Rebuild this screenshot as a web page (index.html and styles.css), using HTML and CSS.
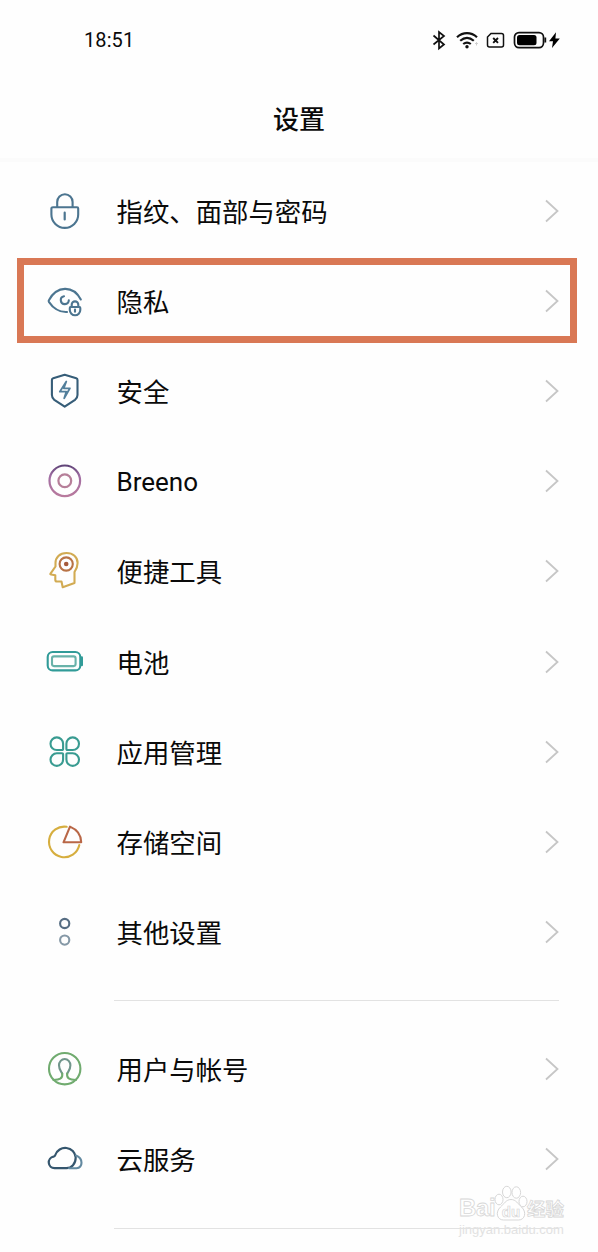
FILE: index.html
```html
<!DOCTYPE html>
<html lang="zh-CN">
<head>
<meta charset="utf-8">
<title>设置</title>
<link rel="stylesheet" href="styles.css">
</head>
<body>
<div class="screen">
  <header class="status">
    <span class="time">18:51</span>
    <svg class="status-icons" width="130" height="24" viewBox="0 0 130 24" fill="none" stroke="#111" stroke-width="1.7">
      <path d="M3.5 7.5L14 16.5L9 20.5V4L14 8L3.5 16.5"/>
      <g stroke-width="2.2"><path d="M27 9.2C33 3.8 41 3.8 47 9.2M30.2 12.8C34.5 9 39.5 9 43.800 12.800M33.200 16C35.500 14.200 38.500 14.200 40.800 16"/></g>
      <circle cx="37" cy="18.700" r="1.700" fill="#111" stroke="none"/>
      <path d="M46.500 14.500v3m-1.300-1.500l1.300-1.500 1.300 1.500" stroke="#ccc" stroke-width="1"/>
      <path d="M61 5.500H71.500Q73.500 5.500 73.500 7.500V17Q73.500 19 71.500 19H59.500Q57.500 19 57.500 17V9Z" stroke-width="1.500"/>
      <path d="M63.200 10L68 14.800M68 10L63.200 14.800" stroke-width="1.900"/>
      <rect x="84.500" y="4.600" width="29" height="15" rx="4.500" stroke-width="1.700"/>
      <rect x="87" y="7" width="19.500" height="10.200" rx="2.500" fill="#000" stroke="none"/>
      <path d="M115.300 9.500v5" stroke-width="1.800"/>
      <path d="M126 4.300L119 13.200H123L122 20L129.800 10.500H125.400Z" fill="#000" stroke="none"/>
    </svg>
  </header>
  <h1 class="title">设置</h1>
  <main class="list">
    <div class="row"><svg class="icon" viewBox="0 0 50 50" stroke="#4c7590"><path d="M17.200 21V16a7.700 7.700 0 0 1 15.400 0V21M13 21.300H37Q38.200 21.300 38.200 22.500V28.500a13.400 13.400 0 0 1-26.800 0V22.500Q11.400 21.300 13 21.300Z"/><path d="M24.700 26.700V33.500" stroke-width="2.200"/></svg><span>指纹、面部与密码</span><svg class="arrow" viewBox="0 0 14 24"><path d="M1 1.500L12.500 12L1 22.500"/></svg></div>
    <div class="row selected"><svg class="icon" viewBox="0 0 50 50" stroke="#4c7590"><path d="M27 36C18.500 36.500 12 30.500 8.900 25.800Q8.400 25 8.900 24.200C17 9.500 33 9 40.800 23.500"/><path d="M24 20.200A4 4 0 1 0 28.800 24.300"/><path d="M31.700 31V28.700a3.300 3.300 0 0 1 6.600 0V31M30.500 31H39.500Q40.300 31 40.300 32V34a5.200 5.200 0 0 1-10.500 0V32Q29.800 31 30.500 31ZM35 33.500V35.800"/></svg><span>隐私</span><svg class="arrow" viewBox="0 0 14 24"><path d="M1 1.500L12.500 12L1 22.500"/></svg></div>
    <div class="row"><svg class="icon" viewBox="0 0 50 50" stroke="#365d78"><path d="M24.700 8.800L36.300 12.300Q37.500 12.700 37.500 14V29Q37.500 32 35 33.800L24.700 40.700L14.300 33.800Q11.900 32 11.900 29V14Q11.900 12.700 13.200 12.300Z"/><path stroke="#527f9b" d="M26.300 15.500L19.800 25.700H26.300L24.200 32.300L29.900 22.300H23.800Z" stroke-width="1.800"/></svg><span>安全</span><svg class="arrow" viewBox="0 0 14 24"><path d="M1 1.500L12.500 12L1 22.500"/></svg></div>
    <div class="row"><svg class="icon" viewBox="0 0 50 50"><defs><linearGradient id="breeno" x1="0" y1="0" x2="0" y2="1"><stop stop-color="#604478"/><stop offset=".35" stop-color="#a16da3"/><stop offset="1" stop-color="#b87a9d"/></linearGradient></defs><circle cx="24.800" cy="24.800" r="15.300" stroke="url(#breeno)" stroke-width="2.200"/><circle cx="24.800" cy="24.800" r="6.400" stroke="#b67f99" stroke-width="2.200"/></svg><span class="latin">Breeno</span><svg class="arrow" viewBox="0 0 14 24"><path d="M1 1.500L12.500 12L1 22.500"/></svg></div>
    <div class="row"><svg class="icon" viewBox="0 0 50 50" stroke="#d2ab53"><path d="M26.500 7C19.500 7 15.500 11.500 15.500 17V20.500L10.500 27.600Q10 28.500 11 28.500L15.300 29.200V34Q15.300 35.500 17 35.500H21.500L22.700 41.200L34.500 37V26C36.500 23 37.600 20 37.600 17C37.600 11 33 7 26.500 7Z"/><circle cx="26.200" cy="18" r="6.600" stroke="#b87346"/><circle cx="26.200" cy="18" r="2.300" fill="#a55a3b" stroke="none"/></svg><span>便捷工具</span><svg class="arrow" viewBox="0 0 14 24"><path d="M1 1.500L12.500 12L1 22.500"/></svg></div>
    <div class="row"><svg class="icon" viewBox="0 0 50 50" stroke="#319b98"><rect x="7.700" y="15" width="32.600" height="18.400" rx="5"/><rect x="12" y="19.400" width="23.600" height="9.700" rx="2" stroke="#68b2a9"/><path d="M41.800 20.500V28" stroke-width="2.400"/></svg><span>电池</span><svg class="arrow" viewBox="0 0 14 24"><path d="M1 1.500L12.500 12L1 22.500"/></svg></div>
    <div class="row"><svg class="icon" viewBox="0 0 50 50" stroke="#399b91"><path id="petal" d="M16.800 10.400a6.300 6.300 0 0 1 6.300 6.300V22Q23.100 23 22.100 23H16.800a6.300 6.300 0 0 1 0-12.600Z"/><use href="#petal" transform="translate(49.500 0) scale(-1 1)"/><use href="#petal" transform="translate(0 49.300) scale(1 -1)"/><use href="#petal" transform="translate(49.500 49.300) scale(-1 -1)"/></svg><span>应用管理</span><svg class="arrow" viewBox="0 0 14 24"><path d="M1 1.500L12.500 12L1 22.500"/></svg></div>
    <div class="row"><svg class="icon" viewBox="0 0 50 50" stroke="#d6ae3f"><path d="M26.700 9.800A15.300 15.300 0 1 0 39.300 28"/><path d="M30 9.600L23.500 25.300H41.200Q41.200 14.300 30 9.600Z" stroke="#b96747"/></svg><span>存储空间</span><svg class="arrow" viewBox="0 0 14 24"><path d="M1 1.500L12.500 12L1 22.500"/></svg></div>
    <div class="row"><svg class="icon" viewBox="0 0 50 50" stroke="#566d83"><circle cx="24.700" cy="16.500" r="4.600"/><circle cx="24.700" cy="33.100" r="4.600" stroke="#8598a6"/></svg><span>其他设置</span><svg class="arrow" viewBox="0 0 14 24"><path d="M1 1.500L12.500 12L1 22.500"/></svg></div>
    <hr class="divider">
    <div class="row"><svg class="icon" viewBox="0 0 50 50" stroke="#70ab6f"><circle cx="24.700" cy="24.700" r="15.700"/><path stroke="#71968c" d="M22.200 29.500C21 27 19 25.500 19 21.300A5.700 6.300 0 0 1 30.400 21.300C30.400 25.500 28.400 27 27.200 29.500"/><path d="M22.200 29.500C23.200 35 19 35.500 13.500 36M27.200 29.500C26.200 35 30.400 35.500 35.900 36"/></svg><span>用户与帐号</span><svg class="arrow" viewBox="0 0 14 24"><path d="M1 1.500L12.500 12L1 22.500"/></svg></div>
    <div class="row"><svg class="icon" viewBox="0 0 50 50" stroke="#35566e"><path d="M14.500 34.200A5.800 5.800 0 0 1 13.500 22.700Q15 22.300 15.300 21A10.500 10.500 0 0 1 35.700 23.500C35.700 30 31.500 34.200 26.500 34.200Z" stroke-width="2.200"/><path d="M29 34.200H36.500C43 33.500 43.500 24.500 36 21.500" stroke="#6289a0"/></svg><span>云服务</span><svg class="arrow" viewBox="0 0 14 24"><path d="M1 1.500L12.500 12L1 22.500"/></svg></div>
    <hr class="divider">
  </main>
  <div class="watermark">
    <div class="brand">
      <span class="bai">Bai</span>
      <svg class="paw" width="34" height="38" viewBox="0 0 34 38"><ellipse cx="5" cy="14.500" rx="4" ry="5.300"/><ellipse cx="12.800" cy="7" rx="4.300" ry="5.700"/><ellipse cx="22.300" cy="7.500" rx="4.300" ry="5.700"/><ellipse cx="29" cy="16.500" rx="4" ry="5.300"/><path d="M17 14.500C12 14.500 10 19 6.500 22C1 27 3 35 9.500 35H24.500C31 35 33 27 27.500 22C24 19 22 14.500 17 14.500Z"/><text x="17" y="31.500" text-anchor="middle">du</text></svg>
      <span class="cn">经验</span>
    </div>
    <div class="site">jingyan.baidu.com</div>
  </div>
</div>
</body>
</html>
```
FILE: styles.css
```css
* { box-sizing: border-box; }
body { margin: 0; background: #fefefe; }
.screen {
  position: relative;
  width: 598px;
  height: 1252px;
  overflow: hidden;
  color: #0a0a0a;
  font-family: "Noto Sans CJK SC", sans-serif;
}
.status {
  display: flex;
  justify-content: space-between;
  align-items: center;
  height: 80px;
  padding: 0 36px 0 84px;
}
.time { font: 20px/24px Roboto, sans-serif; letter-spacing: .1px; }
.status-icons { display: block; margin: 0 2px 0 0; }
.title {
  height: 78px;
  margin: 0;
  font-size: 26px;
  font-weight: 500;
  line-height: 76px;
  text-align: center;
}
.list {
  padding-top: 4px;
  border-top: 4px solid #fbfbfb;
}
.row {
  display: flex;
  align-items: center;
  height: 90.1px;
  padding: 0 39px 0 40px;
  font-size: 26.4px;
  line-height: 40px;
}
.row span { flex: 1; padding-left: 26.5px; }
.row .latin { font-family: Roboto, sans-serif; font-size: 26px; padding-top: 2px; }
.selected { position: relative; }
.selected::after {
  content: "";
  position: absolute;
  inset: 2px 21.5px 3px 17px;
  border: 7px solid #d97855;
}
.icon {
  display: block;
  width: 50px;
  height: 50px;
  fill: none;
  stroke-width: 2.1;
  stroke-linecap: round;
  stroke-linejoin: round;
}
.arrow {
  display: block;
  width: 14px;
  height: 24px;
  fill: none;
  stroke: #c6c6c6;
  stroke-width: 1.8;
}
.divider {
  height: 1px;
  margin: 23px 39px 23.5px 114px;
  border: 0;
  background: #e2e2e2;
}
.watermark {
  position: absolute;
  left: 459px;
  top: 1186px;
  width: 120px;
  color: #fff;
  -webkit-text-stroke: .8px #d7d7d7;
  font-family: "Liberation Sans", sans-serif;
}
.brand { display: flex; align-items: flex-end; height: 37px; font-size: 25px; font-weight: bold; line-height: 30px; }
.brand .bai { width: 35px; font-size: 24px; letter-spacing: -.3px; }
.brand .cn { font-family: "Noto Sans CJK SC", sans-serif; font-size: 18.5px; margin-left: -1px; }
.paw { display: block; flex: none; fill: #fff; stroke: #d7d7d7; stroke-width: 1; }
.paw text { font: bold 15px "Liberation Sans", sans-serif; stroke-width: .7; }
.site { margin-top: -1px; font-size: 13px; line-height: 15px; -webkit-text-stroke: 0; color: #e2e2e2; }
```
